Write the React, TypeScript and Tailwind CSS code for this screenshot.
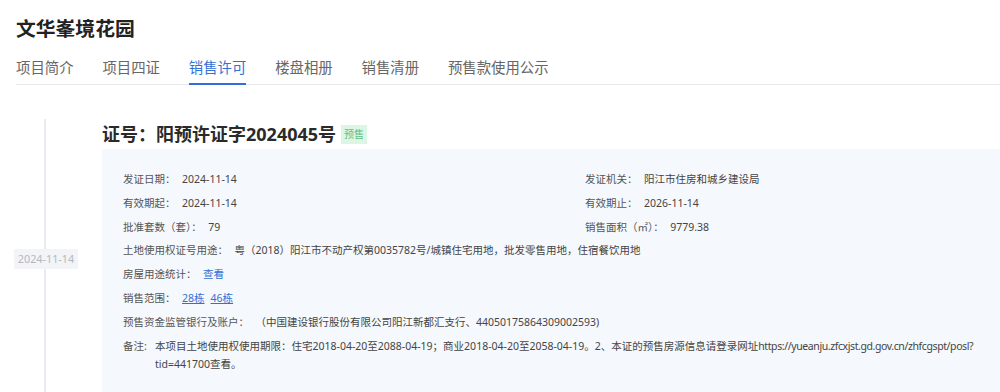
import React from 'react';

const tabs = ['项目简介', '项目四证', '销售许可', '楼盘相册', '销售清册', '预售款使用公示'];

const pairs: [string, string][][] = [
  [['发证日期：', '2024-11-14'], ['发证机关：', '阳江市住房和城乡建设局']],
  [['有效期起：', '2024-11-14'], ['有效期止：', '2026-11-14']],
  [['批准套数（套）：', '79'], ['销售面积（㎡）：', '9779.38']],
];

const Field: React.FC<{ label: string; children: React.ReactNode }> = ({ label, children }) => (
  <div className="flex items-start">
    <span className="text-[#555] whitespace-nowrap">{label}</span>
    <span className="ml-[6.5px] text-[#444]">{children}</span>
  </div>
);

export default function App() {
  return (
    <div className="w-[1000px] h-[392px] overflow-hidden bg-white font-['Noto_Sans','Noto_Sans_CJK_SC',sans-serif]">
      <div className="pl-4">
        <h1 className="pt-[15px] text-[19.8px] leading-[28px] font-bold text-[#222]">文华峯境花园</h1>

        {/* tabs */}
        <div className="mt-[15px] flex gap-[28.8px] border-b border-[#e6e8ec]">
          {tabs.map((t) => (
            <div
              key={t}
              className={`pb-[5px] text-[14.4px] leading-[20px] border-b-2 -mb-px ${
                t === '销售许可' ? 'text-[#3370d6] border-[#3370d6]' : 'text-[#666] border-transparent'
              }`}
            >
              {t}
            </div>
          ))}
        </div>
      </div>

      {/* timeline item */}
      <div className="mt-[34px] flex">
        <div className="relative w-[92px] flex items-center justify-center">
          <div className="absolute left-[44px] top-0 bottom-0 w-[2px] bg-[#e8ebf0]" />
          <span className="relative -mt-[2px] px-[4px] bg-[#f2f4f7] text-[#b4b8bf] text-[10.8px] leading-[20px]">
            2024-11-14
          </span>
        </div>

        <div className="ml-[10px] flex-1 min-w-0">
          <div className="flex items-center h-[30px]">
            <span className="text-[18px] font-bold text-[#2a2a2a]">证号：阳预许证字2024045号</span>
            <span className="ml-[5px] px-[3px] bg-[#dcf5e4] text-[#62c083] text-[10px] leading-[19px]">预售</span>
          </div>

          <div className="bg-[#f5f8fc] pt-[21px] pb-[28px] pl-[21px] pr-2 text-[10.5px] leading-[18px]">
            <div className="flex flex-col gap-[5.8px]">
              {pairs.map((row, i) => (
                <div key={i} className="grid grid-cols-[462px_1fr]">
                  {row.map(([l, v]) => (
                    <Field key={l} label={l}>{v}</Field>
                  ))}
                </div>
              ))}
              <Field label="土地使用权证号用途：">
                粤（2018）阳江市不动产权第0035782号/城镇住宅用地，批发零售用地，住宿餐饮用地
              </Field>
              <Field label="房屋用途统计：">
                <span className="text-[#3370d6]">查看</span>
              </Field>
              <Field label="销售范围：">
                <span className="text-[#3370d6] underline">28栋</span>
                <span className="ml-[6px] text-[#3370d6] underline">46栋</span>
              </Field>
              <Field label="预售资金监管银行及账户：">（中国建设银行股份有限公司阳江新都汇支行、44050175864309002593)</Field>
              <div className="flex items-start">
                <span className="text-[#555] w-[32px] shrink-0">备注:</span>
                <div className="text-[#444]">
                  <div className="whitespace-nowrap">
                    本项目土地使用权使用期限：住宅2018-04-20至2088-04-19；商业2018-04-20至2058-04-19。2、本证的预售房源信息请登录网址
                    <span className="tracking-[-0.4px]">https://yueanju.zfcxjst.gd.gov.cn/zhfcgspt/posl?</span>
                  </div>
                  <div>tid=441700查看。</div>
                </div>
              </div>
            </div>
          </div>
        </div>
      </div>
    </div>
  );
}
